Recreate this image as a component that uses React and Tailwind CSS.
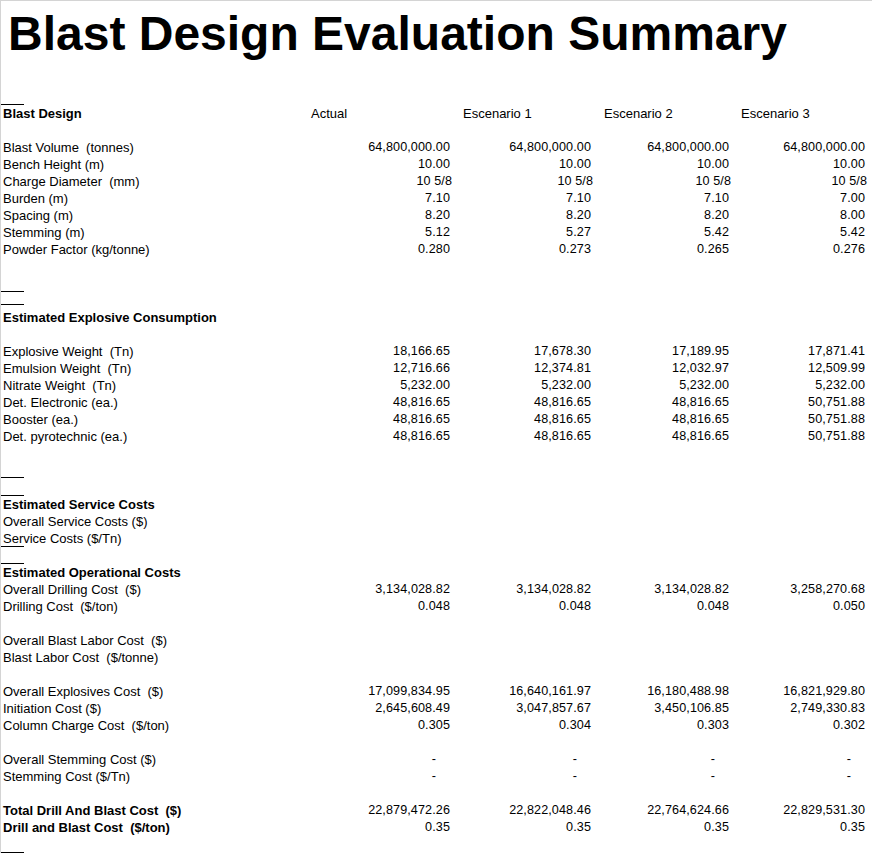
import React from "react";

const COLS = ["w-[143px]", "w-[141px]", "w-[138px]", "w-[136px]"];

function Line() {
  return <div className="h-px w-[23px] bg-black" />;
}

function Row({ label, bold, vals, kind, short }) {
  return (
    <div className={`flex leading-[17px] ${short ? "h-[16px]" : "h-[17px]"}`}>
      <div className={`w-[308px] shrink-0 pl-[2px] text-[13px] whitespace-pre ${bold ? "font-bold" : ""}`}>
        {label}
      </div>
      {vals &&
        vals.map((v, i) => (
          <div
            key={i}
            className={`${COLS[i]} shrink-0 text-right text-[12.6px] tracking-[0.1px] whitespace-pre ${
              kind === "frac" ? "pr-0" : kind === "dash" ? "pr-[16px]" : "pr-[2px]"
            }`}
          >
            {v}
          </div>
        ))}
    </div>
  );
}

function Blank() {
  return <div className="h-[17px]" />;
}

export default function App() {
  return (
    <div className="w-[872px] h-[853px] overflow-hidden bg-white border-t border-l border-[#d4d4d4] font-['Liberation_Sans',Arial,sans-serif] text-black">
      <div className="h-[103px] pl-[7px] pt-[9px] text-[48px] leading-[48px] font-bold whitespace-nowrap">
        Blast Design Evaluation Summary
      </div>
      <Line />
      <div className="flex h-[17px] leading-[17px] text-[13px]">
        <div className="w-[308px] shrink-0 pl-[2px] font-bold">Blast Design</div>
        <div className="w-[143px] shrink-0 pl-[2px]">Actual</div>
        <div className="w-[141px] shrink-0 pl-[11px]">Escenario 1</div>
        <div className="w-[138px] shrink-0 pl-[11px]">Escenario 2</div>
        <div className="w-[136px] shrink-0 pl-[10px]">Escenario 3</div>
      </div>
      <Blank />
      <Row label="Blast Volume  (tonnes)" vals={["64,800,000.00", "64,800,000.00", "64,800,000.00", "64,800,000.00"]} />
      <Row label="Bench Height (m)" vals={["10.00", "10.00", "10.00", "10.00"]} />
      <Row label="Charge Diameter  (mm)" kind="frac" vals={["10 5/8", "10 5/8", "10 5/8", "10 5/8"]} />
      <Row label="Burden (m)" vals={["7.10", "7.10", "7.10", "7.00"]} />
      <Row label="Spacing (m)" vals={["8.20", "8.20", "8.20", "8.00"]} />
      <Row label="Stemming (m)" vals={["5.12", "5.27", "5.42", "5.42"]} />
      <Row label="Powder Factor (kg/tonne)" vals={["0.280", "0.273", "0.265", "0.276"]} />

      <div className="h-[33px]" />
      <Line />
      <div className="h-[12px]" />
      <Line />
      <div className="h-[4px]" />
      <Row label="Estimated Explosive Consumption" bold />
      <Blank />
      <Row label="Explosive Weight  (Tn)" vals={["18,166.65", "17,678.30", "17,189.95", "17,871.41"]} />
      <Row label="Emulsion Weight  (Tn)" vals={["12,716.66", "12,374.81", "12,032.97", "12,509.99"]} />
      <Row label="Nitrate Weight  (Tn)" vals={["5,232.00", "5,232.00", "5,232.00", "5,232.00"]} />
      <Row label="Det. Electronic (ea.)" vals={["48,816.65", "48,816.65", "48,816.65", "50,751.88"]} />
      <Row label="Booster (ea.)" vals={["48,816.65", "48,816.65", "48,816.65", "50,751.88"]} />
      <Row label="Det. pyrotechnic (ea.)" vals={["48,816.65", "48,816.65", "48,816.65", "50,751.88"]} />

      <div className="h-[32px]" />
      <Line />
      <div className="h-[17px]" />
      <Line />
      <Row label="Estimated Service Costs" bold />
      <Row label="Overall Service Costs ($)" />
      <Row label="Service Costs ($/Tn)" short />
      <Line />
      <div className="h-[16px]" />
      <Line />
      <Row label="Estimated Operational Costs" bold />
      <Row label="Overall Drilling Cost  ($)" vals={["3,134,028.82", "3,134,028.82", "3,134,028.82", "3,258,270.68"]} />
      <Row label="Drilling Cost  ($/ton)" vals={["0.048", "0.048", "0.048", "0.050"]} />
      <Blank />
      <Row label="Overall Blast Labor Cost  ($)" />
      <Row label="Blast Labor Cost  ($/tonne)" />
      <Blank />
      <Row label="Overall Explosives Cost  ($)" vals={["17,099,834.95", "16,640,161.97", "16,180,488.98", "16,821,929.80"]} />
      <Row label="Initiation Cost ($)" vals={["2,645,608.49", "3,047,857.67", "3,450,106.85", "2,749,330.83"]} />
      <Row label="Column Charge Cost  ($/ton)" vals={["0.305", "0.304", "0.303", "0.302"]} />
      <Blank />
      <Row label="Overall Stemming Cost ($)" kind="dash" vals={["-", "-", "-", "-"]} />
      <Row label="Stemming Cost ($/Tn)" kind="dash" vals={["-", "-", "-", "-"]} />
      <Blank />
      <Row label="Total Drill And Blast Cost  ($)" bold vals={["22,879,472.26", "22,822,048.46", "22,764,624.66", "22,829,531.30"]} />
      <Row label="Drill and Blast Cost  ($/ton)" bold vals={["0.35", "0.35", "0.35", "0.35"]} />
      <div className="h-[16px]" />
      <Line />
    </div>
  );
}
